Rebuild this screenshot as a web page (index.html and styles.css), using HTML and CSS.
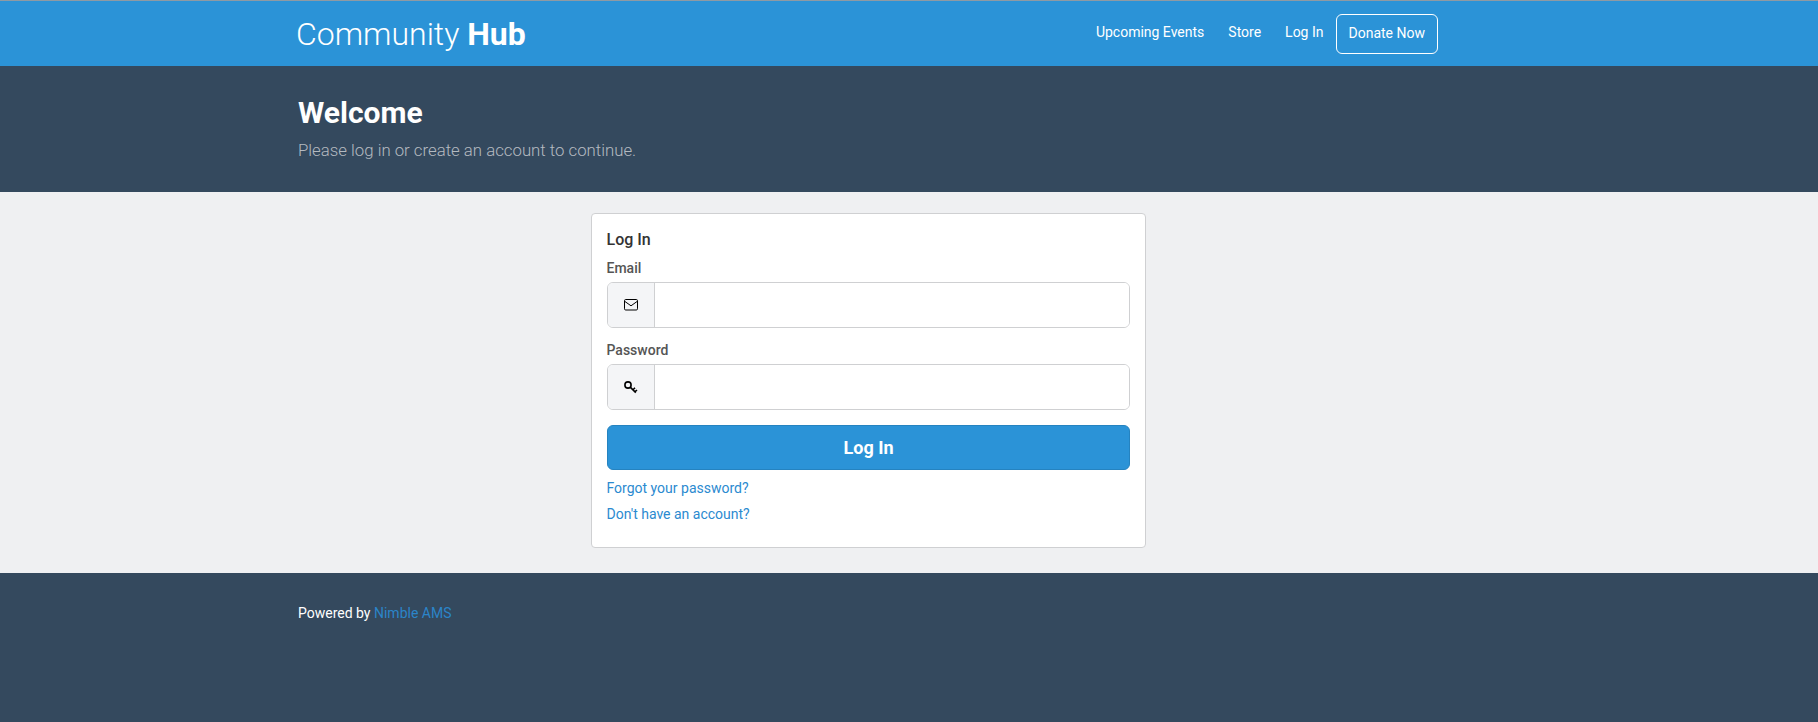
FILE: index.html
```html
<!DOCTYPE html>
<html lang="en">
<head>
<meta charset="utf-8">
<title>Community Hub</title>
<link rel="stylesheet" href="styles.css">
</head>
<body>
<header class="topbar">
  <div class="wrap topbar-inner">
    <a class="brand" href="#">Community <b>Hub</b></a>
    <nav class="nav">
      <a href="#">Upcoming Events</a>
      <a href="#">Store</a>
      <a href="#">Log In</a>
      <a class="donate" href="#">Donate Now</a>
    </nav>
  </div>
</header>
<section class="hero">
  <div class="wrap">
    <h1>Welcome</h1>
    <p>Please log in or create an account to continue.</p>
  </div>
</section>
<main class="content">
  <div class="card">
    <h2>Log In</h2>
    <label for="email">Email</label>
    <div class="group">
      <span class="addon">
        <svg width="14" height="12" viewBox="0 0 14 12" fill="none" stroke="#000" stroke-width="1"><rect x=".5" y=".5" width="13" height="10.5" rx="1.2"/><path d="M.8 2.4 7 6.8l6.2-4.4"/></svg>
      </span>
      <input id="email" type="text">
    </div>
    <label for="password">Password</label>
    <div class="group">
      <span class="addon">
        <svg width="14" height="13" viewBox="0 0 14 13" fill="none" stroke="#000" stroke-width="1.6"><circle cx="4" cy="4" r="3.1"/><path d="m6.2 6.2 5.6 5.4M9 8.8l2-2M11 10.7l2-1.7"/></svg>
      </span>
      <input id="password" type="password">
    </div>
    <button class="submit" type="button">Log In</button>
    <a class="link" href="#">Forgot your password?</a>
    <a class="link" href="#">Don't have an account?</a>
  </div>
</main>
<footer class="footer">
  <div class="wrap">Powered by <a href="#">Nimble AMS</a></div>
</footer>
</body>
</html>
```
FILE: styles.css
```css
* { box-sizing: border-box; }
html, body { height: 100%; }
body {
  margin: 0;
  display: flex;
  flex-direction: column;
  height: 722px;
  overflow: hidden;
  font-family: Roboto, "Liberation Sans", sans-serif;
  font-size: 14px;
  color: #333;
  background: #eff0f2;
}
a { text-decoration: none; }
.wrap { width: 1140px; margin-left: 298px; }
.topbar {
  height: 66px;
  background: #2b93d7;
  border-top: 1px solid #8f9aa3;
}
.topbar-inner {
  height: 65px;
  display: flex;
  align-items: center;
  justify-content: space-between;
}
.brand {
  margin-left: -2px;
  font-size: 32px;
  font-weight: 300;
  color: #fff;
}
.brand b { font-weight: 700; }
.nav { display: flex; align-items: center; gap: 24px; margin-top: -3px; }
.nav a { color: #fff; font-size: 14px; }
.donate {
  display: block;
  margin: 4px 0 0 -12px;
  padding: 10px 12px 11px;
  line-height: 17px;
  border: 1px solid #fff;
  border-radius: 6px;
}
.hero {
  height: 126px;
  padding-top: 29px;
  background: #34495e;
}
.hero h1 {
  margin: 0;
  font-size: 30px;
  line-height: 36px;
  font-weight: 700;
  color: #fff;
}
.hero p {
  margin: 9px 0 0;
  font-size: 16.8px;
  line-height: 20px;
  font-weight: 300;
  color: #b4bac0;
}
.content {
  height: 381px;
  padding: 21px 0 0 591px;
}
.card {
  width: 555px;
  height: 335px;
  padding: 16px 15px 0;
  background: #fff;
  border: 1px solid #cfd0d2;
  border-radius: 4px;
}
.card h2 {
  margin: 0 0 0 -.5px;
  font-size: 16px;
  line-height: 19px;
  font-weight: 500;
  color: #333;
}
.card label {
  display: block;
  margin: 11px 0 0 -.5px;
  font-size: 14px;
  line-height: 17px;
  font-weight: 500;
  color: #555;
}
.card label + .group { margin-top: 5px; }
.group {
  display: flex;
  height: 46px;
  margin-bottom: 14px;
  border: 1px solid #cfd0d2;
  border-radius: 6px;
  overflow: hidden;
}
.group + label { margin-top: 0; }
.addon {
  flex: none;
  width: 47px;
  display: flex;
  align-items: center;
  justify-content: center;
  background: #f4f5f7;
  border-right: 1px solid #cfd0d2;
}
.group input {
  flex: 1;
  min-width: 0;
  border: 0;
  outline: 0;
  background: #fff;
}
.submit {
  display: block;
  width: 100%;
  height: 45px;
  margin: 15px 0 10px;
  padding: 0;
  background: #2b93d7;
  border: 1px solid #2583c0;
  border-radius: 6px;
  color: #fff;
  font-family: inherit;
  font-size: 18px;
  font-weight: 700;
}
.link {
  display: block;
  width: max-content;
  margin: 0 0 9px -.5px;
  font-size: 14px;
  line-height: 17px;
  color: #2b8ad0;
}
.footer {
  flex: 1;
  padding-top: 32px;
  background: #34495e;
  color: #fff;
  font-size: 14px;
  line-height: 17px;
}
.footer a { color: #2b85c9; }
```
